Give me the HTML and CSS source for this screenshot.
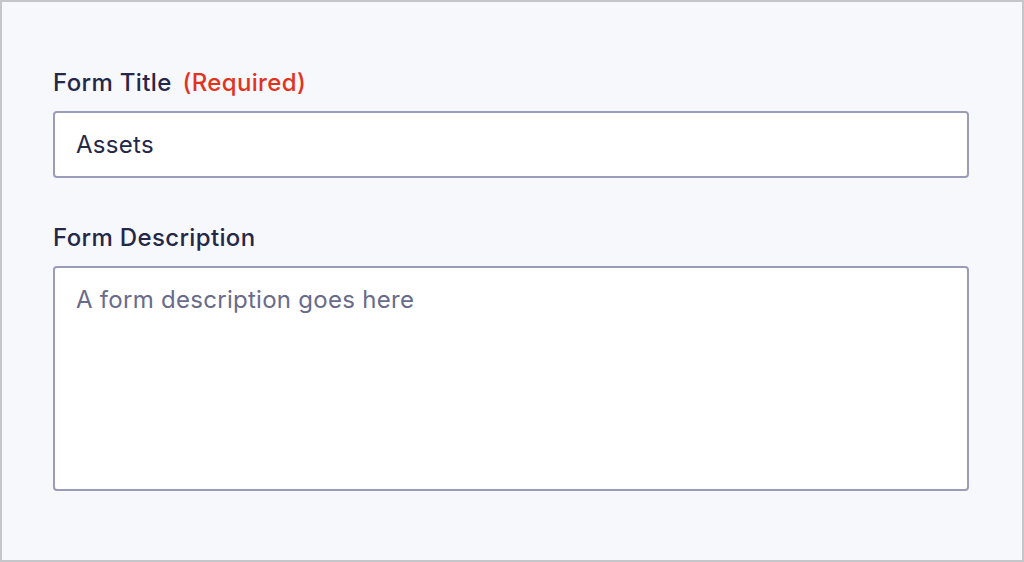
FILE: index.html
```html
<!DOCTYPE html>
<html>
<head>
<meta charset="utf-8">
<link rel="stylesheet" href="styles.css">
</head>
<body>
<div class="panel">
  <div class="field">
    <label class="label">Form Title <span class="req">(Required)</span></label>
    <div class="input">Assets</div>
  </div>
  <div class="field">
    <label class="label">Form Description</label>
    <div class="textarea placeholder">A form description goes here</div>
  </div>
</div>
</body>
</html>
```
FILE: styles.css
```css
html, body {
  margin: 0;
  padding: 0;
}
body {
  width: 1024px;
  height: 562px;
  font-family: Inter, "Noto Sans", sans-serif;
}
.panel {
  box-sizing: border-box;
  width: 1024px;
  height: 562px;
  border: 2px solid #c5c6ca;
  background: #f7f8fc;
  padding: 66px 53px 0 51px;
  display: flex;
  flex-direction: column;
  gap: 45px;
}
.field {
  display: flex;
  flex-direction: column;
  gap: 13px;
}
.label {
  font-size: 24px;
  line-height: 30px;
  font-weight: 500;
  letter-spacing: 0.35px;
  color: #242748;
}
.req {
  color: #e0341f;
  margin-left: 4px;
}
.input, .textarea {
  box-sizing: border-box;
  background: #fff;
  border: 2px solid #9a9cba;
  border-radius: 4px;
  font-size: 24px;
  line-height: 30px;
  letter-spacing: 0.28px;
  color: #242748;
  padding: 0 21px;
}
.input {
  height: 67px;
  display: flex;
  align-items: center;
}
.textarea {
  height: 225px;
  padding-top: 17px;
}
.placeholder {
  color: #686b8b;
}
```
